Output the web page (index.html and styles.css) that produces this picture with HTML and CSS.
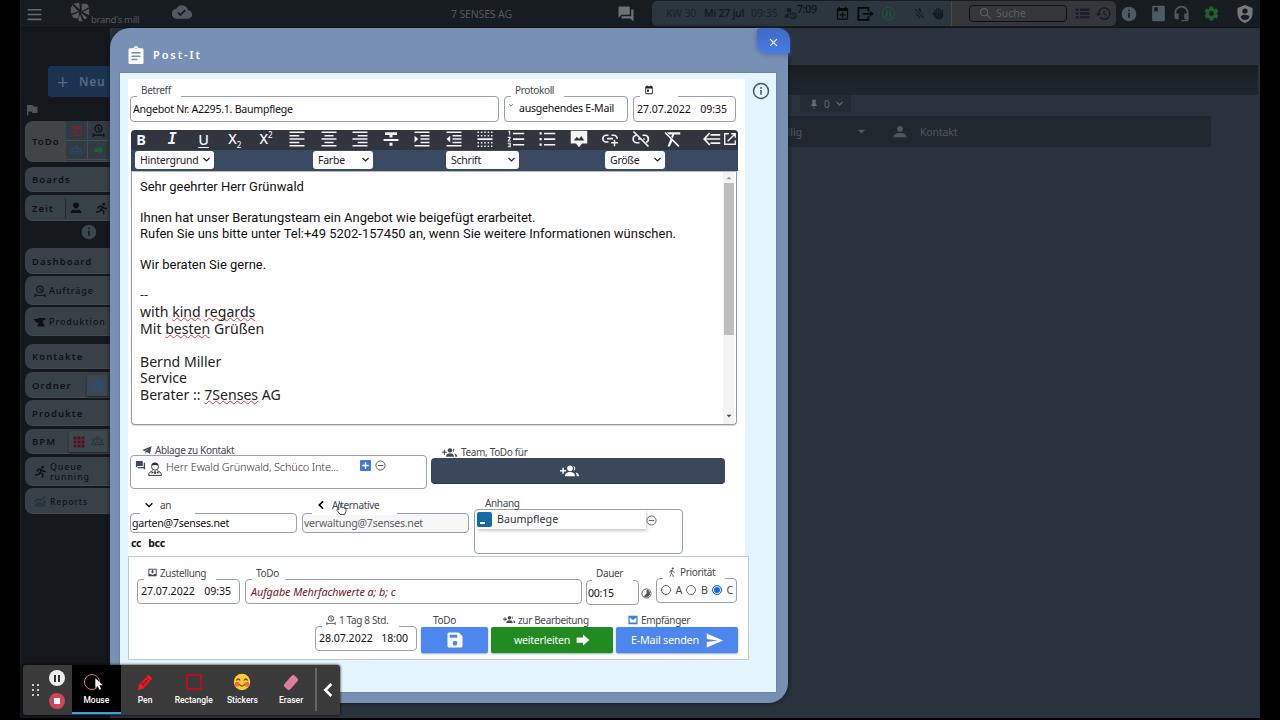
FILE: index.html
```html
<!DOCTYPE html>
<html lang="de">
<head>
<meta charset="utf-8">
<title>Post-It</title>
<link rel="stylesheet" href="styles.css">
</head>
<body>
<svg class="sprite" aria-hidden="true">
  <symbol id="menu" viewBox="0 0 24 24"><path d="M1 3h22v2.6H1zM1 10.7h22v2.6H1zM1 18.4h22V21H1z"/></symbol>
  <symbol id="mill" viewBox="0 0 24 24"><path d="M4 2 11 1l1 8zM14 2l6 0 3 4-9 5zM23 8v8l-8-4zM21 19l-4 2-4-8zM10 11 1 14V7l2-3zM11 12l-1 8-6-1-2-3z"/><path d="m10 21 2-6 3 8h-4z"/></symbol>
  <symbol id="cloud" viewBox="0 0 24 24"><path d="M19.4 10A7.5 7.5 0 0 0 5.4 8 6 6 0 0 0 6 20h13a5 5 0 0 0 .4-10zM10 17l-3.5-3.5 1.4-1.4L10 14.2l5.2-5.2 1.4 1.4z"/></symbol>
  <symbol id="chat" viewBox="0 0 24 24"><path d="M21 6h-2v9H6v2c0 .6.5 1 1 1h11l4 4V7c0-.6-.5-1-1-1zm-4 6V3c0-.6-.5-1-1-1H3c-.6 0-1 .5-1 1v14l4-4h10c.6 0 1-.5 1-1z"/></symbol>
  <symbol id="userclock" viewBox="0 0 24 24"><circle cx="9" cy="6" r="4.5"/><path d="M1 20c0-6 4-8 9-8-2 2-2 5-1 8z"/><circle cx="17" cy="16" r="5.5" fill="none" stroke="currentColor" stroke-width="2"/><path d="M16 12.500h1.700v3.500l3 1.500-.8 1.300-3.900-2z"/></symbol>
  <symbol id="calplus" viewBox="0 0 24 24"><path fill-rule="evenodd" d="M19 3h-1V1h-2v2H8V1H6v2H5a2 2 0 0 0-2 2v15c0 1.100.9 2 2 2h14a2 2 0 0 0 2-2V5a2 2 0 0 0-2-2zm0 17H5V8h14z"/><path d="M11 9.500h2V13h3.500v2H13v3.500h-2V15H7.500v-2H11z"/></symbol>
  <symbol id="exit" viewBox="0 0 24 24"><path d="M16 9V4H2v17h14v-5M8 12.500h12" fill="none" stroke="currentColor" stroke-width="2.500"/><path d="m18 8 5.500 4.500L18 17z"/></symbol>
  <symbol id="pausering" viewBox="0 0 24 24"><circle cx="12" cy="12" r="10" fill="none" stroke="currentColor" stroke-width="2"/><path d="M8 7h2.500v10H8zM13.500 7H16v10h-2.500z"/></symbol>
  <symbol id="micoff" viewBox="0 0 24 24"><path d="M12 2a3 3 0 0 1 3 3v6l-5-5V5a3 3 0 0 1 2-3zM4.300 3 21 19.700 19.700 21 3 4.300zM17 11h1.700a7 7 0 0 1-1 3.400l-1.200-1.300zM5.300 11H7a5 5 0 0 0 6 5l1.200 1.300-1.200.4V21h-2v-3.300A7 7 0 0 1 5.300 11z"/></symbol>
  <symbol id="palm" viewBox="0 0 24 24"><path d="M6 11V5h2.500v5h1V2.500H12V10h1V1.500h2.500V10h1V3.500H19V10h1V6h2.500v10c0 4-3 7-7.500 7s-6-2-8-5l-5-6 2-1.500z"/></symbol>
  <symbol id="search" viewBox="0 0 24 24"><circle cx="9.500" cy="9.500" r="6.500" fill="none" stroke="currentColor" stroke-width="2"/><path d="m14 14 7.500 7.500" stroke="currentColor" stroke-width="2.200"/></symbol>
  <symbol id="listview" viewBox="0 0 24 24"><path d="M1 4h5v4H1zM8 4h15v4H8zM1 10h5v4H1zM8 10h15v4H8zM1 16h5v4H1zM8 16h15v4H8z"/></symbol>
  <symbol id="history" viewBox="0 0 24 24"><path d="M13 3a9 9 0 0 0-9 9H1l3.900 3.900L9 12H6a7 7 0 1 1 2 5l-1.400 1.400A9 9 0 1 0 13 3zm-1 5v5l4.300 2.500.7-1.200-3.500-2.100V8z"/></symbol>
  <symbol id="info" viewBox="0 0 24 24"><path fill-rule="evenodd" d="M12 1a11 11 0 1 0 0 22 11 11 0 0 0 0-22zm1.300 16.500h-2.600V10h2.600zm0-9.500h-2.600V5.500h2.600z"/></symbol>
  <symbol id="infoline" viewBox="0 0 24 24"><circle cx="12" cy="12" r="10" fill="none" stroke="currentColor" stroke-width="2"/><path d="M11 10.500h2V17h-2zM11 6.800h2v2.100h-2z"/></symbol>
  <symbol id="book" viewBox="0 0 24 24"><path fill-rule="evenodd" d="M5 1h14a2 2 0 0 1 2 2v18a2 2 0 0 1-2 2H5a2 2 0 0 1-2-2V3a2 2 0 0 1 2-2zm1 2v7l2.500-2L11 10V3z"/></symbol>
  <symbol id="headset" viewBox="0 0 24 24"><path d="M12 1a10 10 0 0 0-10 10v6a3 3 0 0 0 3 3h3v-8H4.500v-1a7.500 7.500 0 0 1 15 0v1H16v8h3.500v1H12v2h7a3 3 0 0 0 3-3V11A10 10 0 0 0 12 1z"/></symbol>
  <symbol id="gear" viewBox="0 0 24 24"><path fill-rule="evenodd" d="M19.400 13a7.500 7.500 0 0 0 0-2l2.100-1.600c.2-.2.300-.4.100-.6l-2-3.500c-.1-.2-.4-.3-.6-.2l-2.500 1a7 7 0 0 0-1.700-1l-.4-2.600a.5.500 0 0 0-.5-.5h-4a.5.500 0 0 0-.5.500L9 5.100a7 7 0 0 0-1.700 1l-2.500-1c-.2-.1-.5 0-.6.200l-2 3.500c-.1.200-.1.400.1.600L4.500 11a7.500 7.500 0 0 0 0 2l-2.100 1.600c-.2.200-.3.400-.1.600l2 3.500c.1.200.4.300.6.200l2.500-1a7 7 0 0 0 1.700 1l.4 2.600c0 .3.200.5.500.5h4c.3 0 .5-.2.500-.5l.4-2.600a7 7 0 0 0 1.700-1l2.500 1c.2.100.5 0 .6-.2l2-3.500c.1-.2.1-.4-.1-.6zM12 15.500a3.500 3.500 0 1 1 0-7 3.500 3.500 0 0 1 0 7z"/></symbol>
  <symbol id="shield" viewBox="0 0 24 24"><path fill-rule="evenodd" d="M12 0 2 4v7c0 6 4 11 10 13 6-2 10-7 10-13V4zm0 4.500a3.600 3.600 0 1 1 0 7.200 3.600 3.600 0 0 1 0-7.200zM12 20c-3 0-5-2-6-4.500 1-2 4-2.600 6-2.600s5 .6 6 2.600c-1 2.500-3 4.500-6 4.500z"/></symbol>
  <symbol id="flag" viewBox="0 0 24 24"><path d="M14 5 13.500 2H2v21h2.800v-8H12l.6 3H23V5z"/></symbol>
  <symbol id="cal" viewBox="0 0 24 24"><path fill-rule="evenodd" d="M19 3h-1V1h-2.500v2h-7V1H6v2H5a2 2 0 0 0-2 2v15c0 1.100.9 2 2 2h14a2 2 0 0 0 2-2V5a2 2 0 0 0-2-2zm0 17H5V8.500h14z"/><path d="M7 11h5v5H7z"/></symbol>
  <symbol id="span" viewBox="0 0 24 24"><circle cx="12" cy="8.500" r="6.500" fill="none" stroke="currentColor" stroke-width="2.300"/><path d="M11 5h2v3.500l3 1.800-1 1.500-4-2.300zM1 17h2v2.500h18V17h2v7h-2v-2.500H3V24H1z"/></symbol>
  <symbol id="arrow" viewBox="0 0 24 24"><path d="M1 7.500h11V2.500l11 9.500-11 9.500v-5H1z"/></symbol>
  <symbol id="person" viewBox="0 0 24 24"><circle cx="12" cy="6.500" r="5"/><path d="M1 21c0-5 5-7.500 11-7.500S23 16 23 21z"/></symbol>
  <symbol id="worker" viewBox="0 0 24 24"><path d="M6 6c0-3 2-5 6-5s6 2 6 5l1 2h-2c0 3-2 5-5 5s-5-2-5-5H5zM1 22c0-5 5-7 7-7l4 2 4-2c2 0 7 2 7 7z"/></symbol>
  <symbol id="run" viewBox="0 0 24 24"><circle cx="16" cy="4" r="2.600"/><path d="m14 8-3 6 5 3v6M13 13l-4 4-7 2M13 8 8 8l-3 4M15 9l2 3h5" fill="none" stroke="currentColor" stroke-width="2.700"/></symbol>
  <symbol id="walk" viewBox="0 0 24 24"><circle cx="14" cy="3.500" r="2.500"/><path d="m12 7-2 8 4 3 1 6M10.500 15 7 23M12 7.500 7 10v4M13 8l2 4 4 1" fill="none" stroke="currentColor" stroke-width="2"/></symbol>
  <symbol id="anvil" viewBox="0 0 24 24"><path d="M7 4h16v3c-4 1-6 3-6 6l4 4v4H7v-4l3-3C4 14 1 10 0 6h7z"/></symbol>
  <symbol id="drive" viewBox="0 0 24 24"><path d="M8 2h8l8 14-4 6H4l-4-6zm4 6-5 8.500h10z" fill-rule="evenodd"/></symbol>
  <symbol id="grid" viewBox="0 0 24 24"><path d="M1 1h6v6H1zM9 1h6v6H9zM17 1h6v6h-6zM1 9h6v6H1zM9 9h6v6H9zM17 9h6v6h-6zM1 17h6v6H1zM9 17h6v6H9zM17 17h6v6h-6z"/></symbol>
  <symbol id="people" viewBox="0 0 24 24"><circle cx="12" cy="6" r="2.800" fill="none" stroke="currentColor" stroke-width="1.700"/><circle cx="4.500" cy="9" r="2" fill="none" stroke="currentColor" stroke-width="1.500"/><circle cx="19.500" cy="9" r="2" fill="none" stroke="currentColor" stroke-width="1.500"/><path d="M1 18v-2c1-3 6-3 7 0 1-4 7-4 8 0 1-3 6-3 7 0v2z" fill="none" stroke="currentColor" stroke-width="1.800"/></symbol>
  <symbol id="chart" viewBox="0 0 24 24"><path d="M1 17h4v6H1zM7 14h4v9H7zM13 15h4v8h-4zM19 10h4v13h-4zM1 12l7-6 5 3 9-7 1 2-10 8-5-3-7 6z"/></symbol>
  <symbol id="pin" viewBox="0 0 24 24"><path d="M7 2h10v2h-1v7l3 4v2h-6v6l-1 1-1-1v-6H5v-2l3-4V4H7z"/></symbol>
  <symbol id="down" viewBox="0 0 24 24"><path d="m4 8 8 8 8-8" fill="none" stroke="currentColor" stroke-width="3.200"/></symbol>
  <symbol id="left" viewBox="0 0 24 24"><path d="m17 3-9 9 9 9" fill="none" stroke="currentColor" stroke-width="4"/></symbol>
  <symbol id="caret" viewBox="0 0 24 24"><path d="M2 7h20L12 17z"/></symbol>
  <symbol id="caretup" viewBox="0 0 24 24"><path d="M2 17h20L12 7z"/></symbol>
  <symbol id="clip" viewBox="0 0 24 24"><path fill-rule="evenodd" d="M20 3h-5a3 3 0 0 0-6 0H4a2 2 0 0 0-2 2v17c0 1.100.9 2 2 2h16a2 2 0 0 0 2-2V5a2 2 0 0 0-2-2zm-8-1a1 1 0 1 1 0 2 1 1 0 0 1 0-2zM6 8h12v2H6zM6 12.500h12v2H6zM6 17h8v2H6z"/></symbol>
  <symbol id="close" viewBox="0 0 24 24"><path d="m3 3 18 18M21 3 3 21" stroke="currentColor" stroke-width="3"/></symbol>
  <symbol id="alignl" viewBox="0 0 24 24"><path d="M2 2h20v2H2zM2 6.500h13v2H2zM2 11h20v2H2zM2 15.500h13v2H2zM2 20h20v2H2z"/></symbol>
  <symbol id="alignc" viewBox="0 0 24 24"><path d="M2 2h20v2H2zM6 6.500h12v2H6zM2 11h20v2H2zM6 15.500h12v2H6zM2 20h20v2H2z"/></symbol>
  <symbol id="alignr" viewBox="0 0 24 24"><path d="M2 2h20v2H2zM9 6.500h13v2H9zM2 11h20v2H2zM9 15.500h13v2H9zM2 20h20v2H2z"/></symbol>
  <symbol id="strike" viewBox="0 0 24 24"><path d="M4 3h16v3.500h-6V10h-4V6.500H4zM2 12h20v2.500H2zM10 17h4v4h-4z"/></symbol>
  <symbol id="indent" viewBox="0 0 24 24"><path d="M2 2h20v2H2zM10 6.500h12v2H10zM10 11h12v2H10zM10 15.500h12v2H10zM2 20h20v2H2zM2 7.500v9L7 12z"/></symbol>
  <symbol id="outdent" viewBox="0 0 24 24"><path d="M2 2h20v2H2zM10 6.500h12v2H10zM10 11h12v2H10zM10 15.500h12v2H10zM2 20h20v2H2zM7 7.500v9L2 12z"/></symbol>
  <symbol id="border" viewBox="0 0 24 24"><path d="M2 3h20M2 7.500h20M2 17h20M2 21.500h20" fill="none" stroke="currentColor" stroke-width="2" stroke-dasharray="2 2.500"/><path d="M2 11h20v2.400H2z"/></symbol>
  <symbol id="ol" viewBox="0 0 24 24"><path d="M8 3.500h15v2.300H8zM8 11h15v2.300H8zM8 18.500h15v2.300H8zM2 1h2.200v6H3V3H2zM1 9h4v2l-2.300 3H5v1.200H1V14l2.500-3.500H1zM1 17h4v6H1v-1.200h2.800v-1.300H2v-1.200h1.800v-1H1z"/></symbol>
  <symbol id="ul" viewBox="0 0 24 24"><path d="M8 3.500h15v2.300H8zM8 11h15v2.300H8zM8 18.500h15v2.300H8zM2 3h3v3H2zM2 10.500h3v3H2zM2 18h3v3H2z"/></symbol>
  <symbol id="image" viewBox="0 0 24 24"><path fill-rule="evenodd" d="M1 1h22v17h-7l-4 5-4-5H1zm4 13h14l-4-6-3 4-3-3z"/></symbol>
  <symbol id="link" viewBox="0 0 24 24"><path d="M10 7H7a4.500 4.500 0 0 0 0 9h3M14 7h3a4.500 4.500 0 0 1 4.500 4.500M8 11.500h8" fill="none" stroke="currentColor" stroke-width="2.300"/><path d="M17 13h2v3h3.500v2H19v3.500h-2V18h-3.500v-2H17z"/></symbol>
  <symbol id="unlink" viewBox="0 0 24 24"><path d="M8 7H6.500a5 5 0 0 0 0 10H10M14 7h3a5 5 0 0 1 2 9.500M8 12h4M15 12h2M2 2l20 20" fill="none" stroke="currentColor" stroke-width="2.300"/></symbol>
  <symbol id="clear" viewBox="0 0 24 24"><path d="M5 3h18v3h-8l-2 5-2-2 1.200-3H8zM2 4l1.500-1.500L22 21l-1.500 1.500-8-8L9 22H6l4-10z"/></symbol>
  <symbol id="back" viewBox="0 0 24 24"><path d="M9 4 1.500 12 9 20M2 12h21M10 6.500h13M10 17.500h13" fill="none" stroke="currentColor" stroke-width="2.300"/></symbol>
  <symbol id="open" viewBox="0 0 24 24"><path d="M10 3H3v18h18v-7M14 3h7v7M21 3 8 16" fill="none" stroke="currentColor" stroke-width="2.300"/></symbol>
  <symbol id="plane" viewBox="0 0 24 24"><path d="M1 12 23 3l-4 18-8-4-3 4v-6l9-7-11 7z"/></symbol>
  <symbol id="send" viewBox="0 0 24 24"><path d="M1 22 24 12 1 2v8l16 2-16 2z"/></symbol>
  <symbol id="team" viewBox="0 0 30 20"><path d="M0 8.500h3.500V5h2.200v3.500H9.200v2.200H5.700v3.500H3.500v-3.500H0z"/><circle cx="15" cy="6" r="4.200"/><path d="M7.500 18c0-5 3.500-6.500 7.500-6.500s7.500 1.500 7.500 6.500zM20 2a4.200 4.200 0 0 1 0 8c1.600-2.500 1.600-5.500 0-8zM23 12c3 .7 5.500 2 5.500 6H25c0-2.500-.5-4.500-2-6z"/></symbol>
  <symbol id="butler" viewBox="0 0 24 24"><circle cx="12" cy="8" r="6" fill="none" stroke="currentColor" stroke-width="1.600"/><path d="M6 6c0-7 12-7 12 0l-6-1zM10 18l-4-2v4zM14 18l4-2v4zM10.500 16h3v4h-3z"/><path d="M1 23c0-5 4-7 7-8M23 23c0-5-4-7-7-8M1 23h22" fill="none" stroke="currentColor" stroke-width="1.600"/></symbol>
  <symbol id="minus" viewBox="0 0 24 24"><circle cx="12" cy="12" r="10" fill="none" stroke="currentColor" stroke-width="1.900"/><path d="M6 11h12v2H6z"/></symbol>
  <symbol id="plusbox" viewBox="0 0 24 24"><path fill-rule="evenodd" d="M2 0h20a2 2 0 0 1 2 2v20a2 2 0 0 1-2 2H2a2 2 0 0 1-2-2V2a2 2 0 0 1 2-2zm8.500 5v5.500H5v3h5.500V19h3v-5.500H19v-3h-5.500V5z"/></symbol>
  <symbol id="inbox" viewBox="0 0 24 24"><path fill-rule="evenodd" d="M1 2h22v20H1zm2.500 2.500V16H8l1.500 2h5l1.500-2h4.500V4.500z"/><path d="M10.500 5.500h3V9H17l-5 5.500L7 9h3.500z"/></symbol>
  <symbol id="mail" viewBox="0 0 24 24"><path fill-rule="evenodd" d="M1 2h22v20H1zm3 4v12h16V6l-8 6z"/></symbol>
  <symbol id="half" viewBox="0 0 24 24"><circle cx="12" cy="12" r="10" fill="none" stroke="currentColor" stroke-width="2"/><path d="M12 4a8 8 0 1 1-5.500 14L12 12z"/></symbol>
  <symbol id="save" viewBox="0 0 24 24"><path fill-rule="evenodd" d="M17 2H4a2 2 0 0 0-2 2v16c0 1.100.9 2 2 2h16a2 2 0 0 0 2-2V7zM5 5h10v4H5zm7 14.500a3.200 3.200 0 1 1 0-6.400 3.200 3.200 0 0 1 0 6.400z"/></symbol>
  <symbol id="pointer" viewBox="0 0 24 24"><path d="M4 2v17l4-4 3 7 3-1.300-3-6.700h6z"/></symbol>
  <symbol id="pencil" viewBox="0 0 24 24"><path d="m17 1 6 6L9 22l-8 2 2-8z" fill="#ee1c24"/><path d="m14 5 5 5M6 13l5 5M14 9l1.500 1.500-6 6L8 15z" stroke="#7c1010" stroke-width="1.200" fill="none"/></symbol>
  <symbol id="fingers" viewBox="0 0 16 20"><path d="M4 11V3.500C4 1.500 7 1.500 7 3.500V8c1-1 2.500-.8 2.800.4 1-.8 2.300-.4 2.500.8 1-.6 2.200 0 2.200 1.300V14l-2 4H6l-4.500-6c-.6-1.500 1-2.300 2.500-1z" fill="#fff" stroke="#333" stroke-width="1.300"/></symbol>
</svg>

<div class="app">
  <header class="topbar">
    <svg class="i15 menu"><use href="#menu"/></svg>
    <div class="brand"><svg class="i20"><use href="#mill"/></svg><span>brand's mill</span></div>
    <svg class="i20 cloud"><use href="#cloud"/></svg>
    <div class="company"><span>7 SENSES AG</span></div>
    <svg class="i18 chat"><use href="#chat"/></svg>
    <div class="status">
      <span class="week">KW 30</span><span class="day">Mi 27 jul</span><span class="clock">09:35</span>
      <svg class="i13 uclock"><use href="#userclock"/></svg><span class="elapsed">7:09</span>
      <svg class="i15 black"><use href="#calplus"/></svg><svg class="i17 black"><use href="#exit"/></svg><svg class="i15 pausegreen"><use href="#pausering"/></svg>
      <svg class="i13 mic"><use href="#micoff"/></svg><svg class="i13"><use href="#palm"/></svg>
    </div>
    <div class="searchbar">
      <div class="searchbox"><svg class="i13"><use href="#search"/></svg><span>Suche</span></div>
      <svg class="i15 lv"><use href="#listview"/></svg><svg class="i17"><use href="#history"/></svg>
    </div>
    <div class="tools">
      <svg class="i16"><use href="#info"/></svg><svg class="i17"><use href="#book"/></svg><svg class="i17"><use href="#headset"/></svg><svg class="i17 green"><use href="#gear"/></svg><svg class="i18 light"><use href="#shield"/></svg>
    </div>
  </header>

  <div class="main">
    <nav class="side">
      <div class="new"><b>+</b><span>Neu</span></div>
      <svg class="i12 flag"><use href="#flag"/></svg>
      <div class="item todo"><span>ToDo</span>
        <div class="quad"><i class="red"><svg class="i12"><use href="#cal"/></svg></i><i><svg class="i13"><use href="#span"/></svg></i><i class="blue"><svg class="i13"><use href="#people"/></svg></i><i class="green"><svg class="i10"><use href="#arrow"/></svg></i></div>
      </div>
      <div class="item h25 m5"><span>Boards</span></div>
      <div class="item h26 m3"><span>Zeit</span><div class="pair"><svg class="i12"><use href="#worker"/></svg><svg class="i13"><use href="#run"/></svg></div></div>
      <svg class="i16 sinfo"><use href="#info"/></svg>
      <div class="item h26 dash"><span>Dashboard</span></div>
      <div class="item h29 m2 sub"><svg class="i12"><use href="#span"/></svg><span>Aufträge</span></div>
      <div class="item h29 m2 sub"><svg class="i12"><use href="#anvil"/></svg><span>Produktion</span></div>
      <div class="item h25 m8"><span>Kontakte</span></div>
      <div class="item h26 m3"><span>Ordner</span><div class="chip"><svg class="i13 blue"><use href="#drive"/></svg></div></div>
      <div class="item h26 m2"><span>Produkte</span></div>
      <div class="item h25 m3"><span>BPM</span><div class="chip wide"><svg class="i12 dred"><use href="#grid"/></svg><svg class="i13 slate"><use href="#people"/></svg></div></div>
      <div class="item h29 m3 sub"><svg class="i13"><use href="#run"/></svg><div class="two"><span>Queue</span><span>running</span></div></div>
      <div class="item h26 m2 sub rep"><svg class="i12 slate"><use href="#chart"/></svg><span>Reports</span></div>
    </nav>
    <section class="content">
      <div class="strip"></div>
      <div class="pins"><svg class="i10"><use href="#pin"/></svg><span>0</span><svg class="i9"><use href="#down"/></svg></div>
      <div class="thead"><span class="due">fällig</span><svg class="i9"><use href="#caret"/></svg><svg class="i14"><use href="#person"/></svg><span>Kontakt</span></div>
    </section>
  </div>
</div>

<div class="modal">
  <div class="mhead"><svg class="i18"><use href="#clip"/></svg><h1>Post-It</h1></div>
  <button class="mclose"><svg class="i9"><use href="#close"/></svg></button>
  <div class="mbody">
    <div class="mcol">
      <div class="sheet">
        <div class="row r1">
          <div class="field subject"><label>Betreff</label><div class="box"><span>Angebot Nr. A2295.1. Baumpflege</span></div></div>
          <div class="field proto"><label>Protokoll</label><div class="box"><svg class="i6"><use href="#down"/></svg><span class="t-prot">ausgehendes E-Mail</span></div></div>
          <div class="field date"><label><svg class="i10"><use href="#cal"/></svg></label><div class="box dt"><span>27.07.2022</span><span>09:35</span></div></div>
        </div>
        <div class="editor">
          <div class="etools">
            <b class="g">B</b><b class="g it">I</b><b class="g un">U</b><b class="g x">X<sub>2</sub></b><b class="g x">X<sup>2</sup></b>
            <svg class="i18"><use href="#alignl"/></svg><svg class="i18"><use href="#alignc"/></svg><svg class="i18"><use href="#alignr"/></svg><svg class="i18"><use href="#strike"/></svg><svg class="i18"><use href="#indent"/></svg><svg class="i18"><use href="#outdent"/></svg><svg class="i18"><use href="#border"/></svg><svg class="i18"><use href="#ol"/></svg><svg class="i18"><use href="#ul"/></svg><svg class="i18"><use href="#image"/></svg><svg class="i18"><use href="#link"/></svg><svg class="i18"><use href="#unlink"/></svg><svg class="i18"><use href="#clear"/></svg>
            <svg class="i18 eback"><use href="#back"/></svg><svg class="i14 eopen"><use href="#open"/></svg>
          </div>
          <div class="eselects">
            <div class="sel s1"><span>Hintergrund</span><svg class="i9"><use href="#down"/></svg></div>
            <div class="sel s2"><span>Farbe</span><svg class="i9"><use href="#down"/></svg></div>
            <div class="sel s3"><span>Schrift</span><svg class="i9"><use href="#down"/></svg></div>
            <div class="sel s4"><span>Größe</span><svg class="i9"><use href="#down"/></svg></div>
          </div>
          <div class="epage">
            <div class="etext">
              <p>Sehr geehrter Herr Grünwald</p><p></p>
              <p>Ihnen hat unser Beratungsteam ein Angebot wie beigefügt erarbeitet.</p>
              <p>Rufen Sie uns bitte unter Tel:+49 5202-157450 an, wenn Sie weitere Informationen wünschen.</p><p></p>
              <p>Wir beraten Sie gerne.</p><p></p>
              <div class="sign">
                <p>--</p>
                <p>with <u>kind</u> <u>regards</u></p>
                <p>Mit <u>besten</u> Grüßen</p><p></p>
                <p>Bernd Miller</p>
                <p>Service</p>
                <p>Berater :: <u>7Senses</u> AG</p>
              </div>
            </div>
            <div class="scroll"><svg class="i6"><use href="#caretup"/></svg><div class="thumb"></div><svg class="i6 dk"><use href="#caret"/></svg></div>
          </div>
        </div>
        <div class="row r2">
          <div class="contact"><label><svg class="i10"><use href="#plane"/></svg>Ablage zu Kontakt</label>
            <div class="box"><svg class="i11 cchat"><use href="#chat"/></svg><svg class="i14 cb"><use href="#butler"/></svg><span class="t-cont">Herr Ewald Grünwald, Schüco Inte...</span><svg class="i11 cplus"><use href="#plusbox"/></svg><svg class="i11"><use href="#minus"/></svg></div></div>
          <div class="teamf"><label><svg class="tm"><use href="#team"/></svg>Team, ToDo für</label><button class="tbtn"><svg><use href="#team"/></svg></button></div>
        </div>
        <div class="row r3">
          <div class="mails">
            <div class="row">
              <div class="field to"><label><svg class="i10"><use href="#down"/></svg>an</label><div class="box"><span>garten@7senses.net</span></div></div>
              <div class="field alt"><label><svg class="i10"><use href="#left"/></svg>Alternative</label><div class="box"><span>verwaltung@7senses.net</span></div></div>
            </div>
            <div class="cc"><b>cc</b><b>bcc</b></div>
          </div>
          <div class="attach"><label>Anhang</label><div class="box"><div class="file"><i></i><span>Baumpflege</span></div><svg class="i11"><use href="#minus"/></svg></div></div>
        </div>
      </div>
      <div class="card">
        <div class="row c1">
          <div class="field deliver"><label><svg class="i9"><use href="#inbox"/></svg>Zustellung</label><div class="box dt"><span>27.07.2022</span><span>09:35</span></div></div>
          <div class="field task"><label>ToDo</label><div class="box"><em>Aufgabe Mehrfachwerte a; b; c</em></div></div>
          <div class="field dur"><label>Dauer</label><div class="box"><span>00:15</span></div></div>
          <svg class="i11 half"><use href="#half"/></svg>
          <div class="field prio"><label><svg class="i10"><use href="#walk"/></svg>Priorität</label><div class="box"><i class="rad"></i><span>A</span><i class="rad"></i><span>B</span><i class="rad on"></i><span>C</span></div></div>
        </div>
        <div class="row c2">
          <div class="field due2"><label><svg class="i10"><use href="#span"/></svg>1 Tag 8 Std.</label><div class="box dt"><span>28.07.2022</span><span>18:00</span></div></div>
          <div class="act a1"><label>ToDo</label><button><svg class="i18"><use href="#save"/></svg></button></div>
          <div class="act a2"><label><svg class="tms"><use href="#team"/></svg>zur Bearbeitung</label><button class="gr"><span>weiterleiten</span><svg class="i14"><use href="#arrow"/></svg></button></div>
          <div class="act a3"><label><svg class="i10 mailb"><use href="#mail"/></svg>Empfänger</label><button><span>E-Mail senden</span><svg class="i17"><use href="#send"/></svg></button></div>
        </div>
      </div>
    </div>
    <svg class="i18 minfo"><use href="#infoline"/></svg>
  </div>
  <svg class="hand"><use href="#fingers"/></svg>
</div>

<div class="recorder">
  <div class="grip"><i></i><i></i><i></i><i></i><i></i><i></i></div>
  <div class="ctl"><div class="rc pause"><i></i><i></i></div><div class="rc stop"><i></i></div></div>
  <div class="tool active"><div class="ic"><i class="ring"></i><svg class="i14 ptr"><use href="#pointer"/></svg></div><span>Mouse</span></div>
  <div class="tool"><div class="ic"><svg class="i16"><use href="#pencil"/></svg></div><span>Pen</span></div>
  <div class="tool"><div class="ic"><i class="rect"></i></div><span>Rectangle</span></div>
  <div class="tool"><div class="ic"><svg class="i18" viewBox="0 0 24 24"><circle cx="12" cy="12" r="11" fill="#fdcb35"/><circle cx="5.500" cy="15" r="3.300" fill="#f56a3e"/><circle cx="18.500" cy="15" r="3.300" fill="#f56a3e"/><path d="M4.500 10q2.500-4 5 0M14.500 10q2.500-4 5 0M8.500 15q3.500 5 7 0" fill="none" stroke="#70401c" stroke-width="1.700"/></svg></div><span>Stickers</span></div>
  <div class="tool"><div class="ic"><i class="rubber"></i></div><span>Eraser</span></div>
  <div class="collapse"><svg class="i16"><use href="#left"/></svg></div>
</div>
</body>
</html>
```
FILE: styles.css
```css
* { box-sizing: border-box; }
body { margin: 0; width: 1280px; height: 720px; overflow: hidden; background: #000; font-family: "Noto Sans", "Open Sans", sans-serif; font-size: 11px; position: relative; }
.sprite { display: none; }
svg { fill: currentColor; flex: none; display: block; }
p, h1 { margin: 0; font-weight: normal; }
span, label, b, em { white-space: nowrap; }
button { border: 0; padding: 0; font: inherit; display: flex; align-items: center; justify-content: center; }
.i6 { width: 6px; height: 6px; } .i9 { width: 9px; height: 9px; } .i10 { width: 10px; height: 10px; }
.i11 { width: 11px; height: 11px; } .i12 { width: 12px; height: 12px; } .i13 { width: 13px; height: 13px; }
.i14 { width: 14px; height: 14px; } .i15 { width: 15px; height: 15px; } .i16 { width: 16px; height: 16px; }
.i17 { width: 17px; height: 17px; } .i18 { width: 18px; height: 18px; } .i20 { width: 20px; height: 20px; }

/* dimmed application behind the dialog */
.app { margin: 0 20px; height: 718px; background: #29323d; display: flex; flex-direction: column; }
.topbar { height: 28px; background: #171c21; display: grid; grid-template-columns: 50px 102px 279px 166px 35px 299px 165px 1fr; align-items: center; color: #55595d; border-bottom: 1px solid #101418; }
.menu { margin: 2px 0 0 7px; color: #65696c; }
.brand { display: flex; align-items: flex-end; height: 27px; padding-bottom: 2px; }
.brand span { font-size: 9.500px; line-height: 11px; margin-left: 1px; letter-spacing: -.3px; }
.brand svg { margin-bottom: 3px; }
.cloud { color: #505a60; margin-bottom: 3px; }
.company { font-size: 10.500px; letter-spacing: -.15px; }
.chat { color: #6d7173; }
.status { height: 25px; background: #2b363e; border-radius: 5px 0 0 5px; display: flex; align-items: center; padding-left: 14px; color: #151d23; margin-top: -1px; }
.status span { font-size: 10.500px; }
.week { width: 38px; color: #17222a; letter-spacing: -.2px; } .day { width: 47px; font-weight: 600; color: #121a20; letter-spacing: -.3px; } .clock { width: 33px; color: #17222a; }
.elapsed { width: 38px; margin-top: -9px; color: #080c10; letter-spacing: -.3px; }
.black { color: #050809; margin-right: 7px; }
.pausegreen { color: #22523b; margin-right: 17px; }
.mic { margin-right: 5px; }
.searchbar { height: 25px; background: #343739; border-left: 1px solid #454a4c; border-radius: 0 5px 5px 0; display: flex; align-items: center; padding-left: 17px; color: #17191b; margin-top: -1px; }
.searchbox { width: 98px; height: 17px; border: 1.500px solid #0d0f10; border-radius: 4px; display: flex; align-items: center; padding-left: 9px; gap: 4px; color: #5b5f61; }
.searchbox span { font-size: 10.500px; }
.lv { margin: 0 5px 0 8px; color: #1d1d2b; }
.tools { display: flex; align-items: center; padding-left: 5px; color: #4e5a64; }
.tools svg:nth-child(2) { margin-left: 13px; } .tools svg:nth-child(3) { margin-left: 6px; } .tools svg:nth-child(4) { margin-left: 13px; } .tools svg:nth-child(5) { margin-left: 16px; }
.green { color: #1f6030; } .tools .light { color: #777a7b; }
.main { display: flex; flex: 1; }
.side { width: 90px; background: #14171b; display: flex; flex-direction: column; padding: 38px 0 0 5px; color: #0d1115; }
.new { margin-left: 23px; height: 31px; background: #1b3351; border-radius: 3px 0 0 3px; display: flex; align-items: center; color: #54697c; padding-left: 9px; }
.new b { font-size: 20px; font-weight: 400; width: 22px; } .new span { font-size: 12px; font-weight: 600; letter-spacing: .7px; }
.flag { margin: 7px 0 0 1px; color: #505356; }
.item { background: #384148; border-radius: 8px 0 0 8px; display: flex; align-items: center; padding: 1px 0 0 7px; font-size: 9.500px; font-weight: 600; letter-spacing: 1.100px; border-bottom: 1px solid #424b52; }
.todo { height: 41px; margin-top: 5px; background: #424547; padding-top: 0; }
.quad { margin-left: auto; width: 44px; height: 40px; background: #303b43; display: grid; grid-template-columns: 22px 22px; grid-template-rows: 20px 19px; flex: none; }
.quad i { display: flex; align-items: center; justify-content: center; border: solid #444e55; border-width: 0 1px 1px 0; }
.red { color: #82202c; } .blue { color: #2c4b75; } .dred { color: #551018; } .slate { color: #253039; }
.h25 { height: 25px; } .h26 { height: 26px; } .h29 { height: 29px; }
.m2 { margin-top: 2px; } .m3 { margin-top: 3px; } .m5 { margin-top: 5px; } .m8 { margin-top: 8px; }
.pair { margin-left: auto; display: flex; gap: 13px; border-left: 1px solid #252d33; height: 21px; align-items: center; padding: 0 2px 0 4px; }
.sinfo { margin: 3px 0 0 56px; color: #3c464d; }
.dash { margin-top: 8px; }
.sub { padding-left: 9px; gap: 3px; font-size: 9px; font-weight: 500; letter-spacing: .9px; }
.two { display: flex; flex-direction: column; font-size: 8.800px; padding-bottom: 2px; }
.two span { height: 9.500px; line-height: 12px; }
.rep { gap: 4px; font-size: 8.500px; }
.chip { margin: 0 2px 0 auto; height: 21px; width: 21px; background: #3d474e; box-shadow: 0 1px 2px #1c2226; display: flex; align-items: center; justify-content: center; gap: 6px; }
.chip.wide { width: 39px; }
.content { flex: 1; padding-top: 37px; }
.strip { height: 30px; background: linear-gradient(#171c1f, #1c2229 50%, #1e252d); margin-right: 2px; }
.pins { margin: 0 0 0 690px; width: 51px; height: 17px; background: #242b34; display: flex; align-items: center; gap: 5px; padding-left: 9px; color: #626970; font-size: 10px; }
.thead { margin-top: 4px; width: 1101px; height: 31px; background: #21272f; display: flex; align-items: center; color: #50575e; font-size: 10.500px; }
.due { width: 54px; margin-left: 668px; }
.due + svg { margin: 0 27px 0 25px; }
.thead span:last-child { margin-left: 13px; letter-spacing: -.15px; }

/* dialog */
.modal { position: absolute; left: 110px; top: 28px; width: 678px; height: 675px; background: #7890b3; border-radius: 20px; padding: 0 12px 11px 10px; display: flex; flex-direction: column; box-shadow: 0 0 4px #10151c; }
.mhead { height: 45px; display: flex; align-items: center; padding: 8px 0 0 7px; color: #fff; flex: none; }
.mhead h1 { font-size: 11px; font-weight: 600; letter-spacing: 1.900px; margin-left: 8px; }
.mclose { position: absolute; right: -2px; top: 0; width: 33px; height: 25px; background: linear-gradient(#4269c0, #437ce9); color: #fff; border-radius: 3px 12px 0 10px; box-shadow: -1px 2px 4px #5a719a; padding-top: 4px; }
.mbody { flex: 1; background: #e5f5fd; display: flex; padding: 6px 0 0 8px; align-items: flex-start; box-shadow: 0 0 1px #35465e; }
.mcol { width: 621px; }
.minfo { margin: 3px 0 0 3px; color: #47535f; }
.sheet { width: 617px; height: 477px; background: #fff; padding: 4px 0 0 2px; }
.row { display: flex; }
label { color: #454950; font-size: 10px; letter-spacing: -.35px; line-height: 14px; height: 14px; display: flex; align-items: center; gap: 3px; }
.field { display: flex; flex-direction: column; align-items: stretch; }
.field label { align-self: flex-start; margin: 0 0 -1px 7px; padding: 0 10px 0 4px; background: #fff; z-index: 1; }
.box { border: 1px solid #9ba0ae; border-radius: 4px; display: flex; align-items: center; color: #111; padding-left: 2px; font-size: 10.600px; letter-spacing: -.26px; }
.box span, .box em { margin-top: -1px; }
.r1 { gap: 5px; height: 47px; }
.r1 .box { height: 26px; }
.subject { width: 369px; } .proto { width: 124px; } .date { width: 103px; }
.proto .t-prot { margin: -3px 0 0 5px; } .proto svg { margin: -9px 0 0 1px; color: #777; }
.dt { justify-content: space-between; padding: 0 8px 0 3px; letter-spacing: -.05px; }
.date label { padding: 0 24px 0 4px; color: #222; }
.editor { width: 607px; height: 295px; margin-left: 1px; }
.etools { height: 20px; background: #30353e; border-radius: 4px 4px 0 0; display: flex; align-items: center; gap: 13.250px; padding-left: 1px; color: #f3f4f6; }
.etools svg { margin-top: -2px; }
.g { width: 18px; text-align: center; font-size: 14.500px; line-height: 18px; margin-top: -3px; font-weight: 700; }
.it { font-style: italic; font-family: "DejaVu Sans Mono", monospace; font-size: 15px; } .un { text-decoration: underline; font-weight: 500; text-underline-offset: 2px; }
.x { font-weight: 500; font-size: 14px; } .x sub, .x sup { font-size: 8px; line-height: 0; }
.etools .eback { margin-left: 8px; } .etools .eopen { margin-left: -11px; }
.eselects { height: 21px; background: #3a4a62; display: flex; padding: 1px 0 0 4px; }
.sel { height: 18px; background: #fff; border-radius: 3px; display: flex; align-items: center; justify-content: space-between; padding: 0 3px 1px 5px; font-size: 10.500px; letter-spacing: -.25px; color: #222; }
.s1 { width: 79px; } .s2 { width: 60px; margin-left: 99px; } .s3 { width: 73px; margin-left: 73px; } .s4 { width: 60px; margin-left: 86px; }
.epage { height: 254px; width: 606px; border: 1.500px solid #969ba3; border-top-color: #b9bdc5; border-radius: 0 0 4px 4px; display: flex; justify-content: space-between; box-shadow: 0 1px 1px #d5d8dc; }
.etext { padding: 7px 0 0 8px; font-family: Roboto, sans-serif; font-size: 12.970px; color: #111; white-space: nowrap; }
.etext p { height: 15.500px; line-height: 15.500px; }
.etext .sign { font-family: "Noto Sans", sans-serif; font-size: 14.080px; color: #222; }
.etext .sign p { height: 16.600px; line-height: 16.600px; }
.sign p:first-child { font-size: 12.500px; margin-top: -1px; margin-bottom: 1px; }
.sign u { text-decoration: underline wavy #dd3845 .8px; text-underline-offset: 0; text-decoration-skip-ink: none; }
.scroll { width: 11px; background: #f3f3f3; display: flex; flex-direction: column; align-items: center; padding: 3px 0 5px; margin-right: 2px; color: #999; }
.thumb { width: 10px; height: 152px; background: #bdbdbd; margin: 2px 0 auto; }
.dk { color: #444; }
.r2 { margin-top: 18px; height: 50px; }
.contact { width: 301px; }
.contact label { padding-left: 12px; }
.contact .box { width: 297px; height: 34px; align-items: flex-start; margin-top: -2px; padding: 4px 0 0 4px; font-size: 11px; letter-spacing: -.17px; }
.contact .box > svg { color: #3b4a63; } .contact .box .cb { margin: 2px 4px 0 2px; color: #333; }
.contact .box .t-cont { color: #333; line-height: 15px; width: 194px; font-weight: 300; margin-top: -1px; }
.contact .box .cplus { color: #4379da; margin-right: 4px; }
.teamf { padding-top: 2px; } .teamf label { padding-left: 11px; }
.tm { width: 16px; height: 11px; } .tms { width: 13px; height: 9px; }
.tbtn { width: 294px; height: 26px; margin-top: -1px; background: #3b475a; color: #fff; border-radius: 4px; border-bottom: 1px solid #2c3647; }
.tbtn svg { width: 20px; height: 14px; margin-right: 16px; }
.r3 { height: 60px; }
.mails { width: 344px; padding: 5px 0 0; }
.mails .row { gap: 5px; }
.mails .field { width: 167px; }
.mails label svg { color: #000; }
.to label { gap: 6px; padding-right: 24px; } .alt label { gap: 6px; padding-right: 18px; }
.mails .box { height: 20px; padding-left: 1px; }
.mails .field label { height: 17px; margin: 0 0 -2px 10px; padding-bottom: 3px; }
.alt .box { background: #f7f7f8; } .alt .box span { color: #5d5f63; }
.cc { display: flex; gap: 7px; font-size: 10.500px; letter-spacing: -.3px; line-height: 18px; color: #111; padding: 1px 0 0 1px; }
.attach { padding-top: 3px; }
.attach label { padding-left: 11px; }
.attach .box { width: 209px; height: 45px; align-items: flex-start; margin-top: -1px; }
.attach .box > svg { margin: 5px 0 0; color: #555; }
.file { width: 169px; height: 19px; display: flex; align-items: center; box-shadow: 1px 2px 3px #ccc; color: #333; letter-spacing: 0; font-size: 10.700px; }
.file i { width: 15px; height: 15px; border-radius: 2px; background: linear-gradient(#fff, #fff) 3px 10px / 5px 2px no-repeat #156aa5; margin-right: 5px; }
.card { width: 621px; height: 104px; background: #fff; border: 1px solid #bccbd2; padding: 8px 0 0 8px; }
.c1 { height: 47px; } .c1 .box { height: 25px; }
.deliver { width: 103px; margin-right: 5px; } .task { width: 337px; margin-right: 4px; padding-top: 1px; } .dur { width: 53px; padding-top: 2px; } .half { margin: 23px 4px 0 2px; color: #4b5563; } .prio { width: 81px; }
.c1 .deliver label, .c1 .task label { height: 15px; }
.c1 .task label { margin-top: -1px; } .c1 .dur label { margin-top: -2px; height: 16px; margin-left: 6px; }
.task em { color: #701522; margin-left: 3px; font-size: 10.800px; letter-spacing: -.05px; }
.task label { padding-right: 6px; }
.dur .box { padding-left: 1px; } .dur .box span { margin-top: 1px; }
.prio .box { padding: 0 3px 2px 4px; justify-content: space-between; color: #444; }
.prio .box span { margin-top: 1px; }
.rad { width: 10px; height: 10px; border: 1px solid #666; border-radius: 50%; }
.rad.on { border-color: #0b6bdd; background: #0b6bdd; box-shadow: inset 0 0 0 1px #fff; }
.c2 { padding-left: 178px; }
.due2 { width: 102px; margin-right: 4px; } .due2 .box { height: 25px; } .due2 .box span { margin-top: -2px; }
.act button { height: 26px; background: #4d86ec; color: #fff; border-radius: 2px; box-shadow: 0 1px 2px #9ab; font-size: 10.800px; letter-spacing: -.25px; }
.act button span { margin-top: -1px; }
.act label { height: 15px; } .due2 label { height: 15px; }
.act button.gr { background: #218a21; }
.a1 { width: 70px; } .a1 button { width: 67px; } .a2 { width: 125px; } .a2 button { width: 122px; gap: 6px; } .a3 button { width: 122px; gap: 7px; }
.act button.gr { font-size: 10.600px; }
.a1 label, .a2 label, .a3 label { padding-left: 12px; } .a2 label { gap: 2px; } .mailb { color: #3f7fd8; }
.hand { position: absolute; z-index: 2; left: 226px; top: 474px; width: 11px; height: 14px; }

/* screen recorder bar */
.recorder { position: absolute; z-index: 3; left: 23px; top: 665px; width: 317px; height: 50px; background: #3a3a3a; border-radius: 3px; display: flex; color: #fff; font-family: Roboto, sans-serif; box-shadow: 0 0 3px #000; }
.grip { width: 24px; display: grid; grid-template-columns: 2px 2px; gap: 3px; align-content: center; justify-content: center; }
.grip i { width: 2px; height: 2px; background: #ccc; }
.ctl { width: 25px; display: flex; flex-direction: column; gap: 7px; padding: 5px 0 0 2px; }
.rc { width: 16px; height: 16px; border-radius: 50%; background: #eee; display: flex; align-items: center; justify-content: center; gap: 2px; }
.pause i { width: 2px; height: 7px; background: #333; } .stop { background: #d0455a; } .stop i { width: 6px; height: 6px; background: #fff; }
.tool { width: 48.700px; display: flex; flex-direction: column; align-items: center; font-size: 8.500px; font-weight: 500; padding-top: 8px; }
.tool span { line-height: 12px; margin-top: 3px; }
.active { background: #000; border-bottom: 2px solid #35a3dc; height: 49px; }
.ic { height: 18px; display: flex; align-items: center; justify-content: center; flex: none; }
.ring { width: 16px; height: 16px; border: 1.500px solid #e0707f; border-radius: 50%; margin-left: -5px; } .ptr { margin: 4px -4px 0 -7px; }
.rect { width: 16px; height: 16px; border: 2.500px solid #b3111d; }
.rubber { width: 8px; height: 15px; border-radius: 2px; background: #dd7f9c; transform: rotate(42deg); }
.collapse { border-left: 2px solid #666; margin: 3px 0 4px; width: 24px; display: flex; align-items: center; justify-content: center; }
```
